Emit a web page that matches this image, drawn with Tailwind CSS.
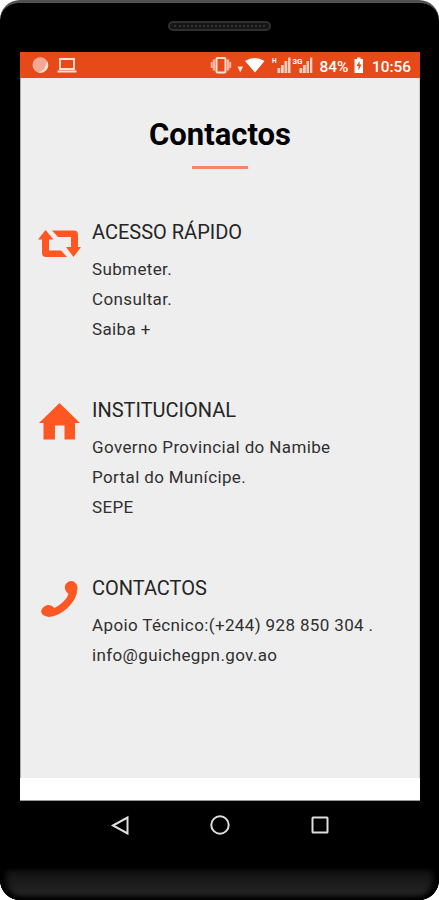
<!DOCTYPE html>
<html lang="pt">
<head>
  <meta charset="UTF-8">
  <meta name="viewport" content="width=device-width, initial-scale=1.0">
  <title>Contactos</title>
  <script src="https://cdn.jsdelivr.net/npm/@tailwindcss/browser@4"></script>
</head>
<body class="bg-white font-['Roboto',sans-serif]">

  <!-- Phone body -->
  <div class="w-[439px] h-[900px] flex flex-col bg-black rounded-[20px] overflow-hidden border-t-3 border-[#505050]">
    <!-- Speaker -->
    <div class="h-[49px] shrink-0 flex justify-center pt-[18px]">
      <div class="w-[103px] h-[10px] rounded-full border-2 border-[#303030] bg-[#151515] flex items-center px-1">
        <div class="w-full border-t-2 border-dotted border-[#333]"></div>
      </div>
    </div>

    <!-- Screen -->
    <div class="mx-5 w-[400px] h-[749px] shrink-0 flex flex-col bg-white border-b border-[#999]">
      <!-- Status bar -->
      <div class="h-[26px] shrink-0 bg-[#e64a19] flex items-center text-white">
        <svg class="w-[400px] h-[26px]" viewBox="0 0 400 26" fill="none">
          <circle cx="20.3" cy="13" r="7.8" fill="#f6a992"/>
          <path d="M27 9a7.800 7.800 0 0 1-9 11.500q8-2 9-11.500z" fill="#fde0d7"/>
          <path d="M40 7h14v10H40zM37.500 19.500h19" stroke="#fde0d7" stroke-width="1.800"/>
          <rect x="196.500" y="6" width="9" height="14.500" rx="1" stroke="#fde0d7" stroke-width="2"/>
          <path d="M194 7.500v11M208 7.500v11" stroke="#f7b5a0" stroke-width="2.500"/>
          <path d="M191.700 10v6M210.200 10v6" stroke="#f7b5a0" stroke-width="2"/>
          <path d="M217.500 14.500h5.500l-2.700 6z" fill="#fde0d7"/>
          <path d="M225 9q9.700-6 19.500 0L235 20.500z" fill="#fff"/>
          <g fill="#fbd0c3">
            <path d="M257.500 16h2.800v5h-2.800zM261 13h2.800v8H261zM264.500 9h2.800v12h-2.800zM268 5.500h2.500V21H268z"/>
            <path d="M279.500 16h2.800v5h-2.800zM283 13h2.800v8H283zM286.500 9h2.500v12h-2.500zM290 5.500h2.300V21H290z"/>
          </g>
          <g fill="#fff" font-family="Roboto" font-weight="700">
            <text x="252" y="11" font-size="6.500">H</text>
            <text x="272.500" y="12" font-size="8">3G</text>
            <text x="299.500" y="19.500" font-size="15.500" font-weight="500" textLength="29" lengthAdjust="spacingAndGlyphs">84%</text>
            <text x="352" y="19.500" font-size="15.500" font-weight="500" textLength="39" lengthAdjust="spacingAndGlyphs">10:56</text>
          </g>
          <path d="M334.500 7h2.500V5.500h3.500V7h2.500v14h-8.500z" fill="#fff"/>
          <path d="M339.500 9l-3 5h2v4.500l3-6h-2z" fill="#e64a19"/>
        </svg>
      </div>

      <!-- Page -->
      <main class="h-[700px] shrink-0 bg-[#eeeeee] border-x border-l-[#aaa] border-r-[#ccc] text-[#303030]">
        <h1 class="pt-[39px] text-center text-[31px] leading-[36px] font-bold text-black">Contactos</h1>
        <div class="mx-auto mt-[13px] w-[56px] h-[3px] bg-[#fa8268]"></div>

        <section class="mt-[44px] h-[178px] flex">
          <div class="w-[71px] shrink-0 pl-[17px] pt-[17px]">
            <svg class="w-[43px] h-[28px]" viewBox="0 0 43 28" fill="#ff5722">
              <path d="M7.500 0L0 9.500h4V23q0 4 4 4h21l-6-6.500H11v-11h4.500zM14 .5h22q4 0 4 4V17h3l-7.500 10L28 17h5V7H20z"/>
            </svg>
          </div>
          <div>
            <h2 class="text-[20px] leading-[38px] text-[#252525]">ACESSO RÁPIDO</h2>
            <ul class="text-[17px] leading-[30px] tracking-[0.37px] pt-[3px]">
              <li>Submeter.</li>
              <li>Consultar.</li>
              <li>Saiba +</li>
            </ul>
          </div>
        </section>

        <section class="h-[178px] flex">
          <div class="w-[71px] shrink-0 pl-[18px] pt-[12px]">
            <svg class="w-[41px] h-[37px]" viewBox="0 0 41 37" fill="#ff5722">
              <path d="M20.500 0L41 20h-5v16.500H25.500V22.500h-9.500v14H4.500V20H0z"/>
            </svg>
          </div>
          <div>
            <h2 class="text-[20px] leading-[38px] text-[#252525]">INSTITUCIONAL</h2>
            <ul class="text-[17px] leading-[30px] tracking-[0.37px] pt-[3px]">
              <li>Governo Provincial do Namibe</li>
              <li>Portal do Munícipe.</li>
              <li>SEPE</li>
            </ul>
          </div>
        </section>

        <section class="flex">
          <div class="w-[71px] shrink-0 pl-[20px] pt-[12px]">
            <svg class="w-[37px] h-[36px]" viewBox="0 0 37 36" fill="#ff5722">
              <path d="M24 4.500Q26 0 30.500 0q5 .5 6 6.500 0 10.500-9 19.500T8 36Q1 35 0 30.500q1-5 6.500-6.500 4-.5 7 3 5-2.500 9-6.500t5-7.500Q23 9.500 24 4.500z"/>
            </svg>
          </div>
          <div>
            <h2 class="text-[20px] leading-[38px] text-[#252525]">CONTACTOS</h2>
            <ul class="text-[17px] leading-[30px] tracking-[0.37px] pt-[3px] whitespace-nowrap">
              <li>Apoio Técnico:(+244) 928 850 304 .</li>
              <li>info@guichegpn.gov.ao</li>
            </ul>
          </div>
        </section>
      </main>
    </div>

    <!-- Navigation keys -->
    <div class="h-[67px] shrink-0 flex justify-center gap-20 pt-[14px]">
      <svg class="w-5 h-5" viewBox="0 0 20 20" fill="none" stroke="#ddd" stroke-width="2"><path d="M3 10.500L17.500 2.500v16z"/></svg>
      <svg class="w-5 h-5" viewBox="0 0 20 20" fill="none" stroke="#ddd" stroke-width="2"><circle cx="10" cy="10" r="8.700"/></svg>
      <svg class="w-5 h-5" viewBox="0 0 20 20" fill="none" stroke="#ddd" stroke-width="2"><rect x="2.500" y="2.500" width="15" height="15" rx=".5"/></svg>
    </div>

    <!-- Chin -->
    <div class="grow rounded-b-[20px] bg-linear-to-b from-[#111] to-[#292929] shadow-[inset_0_-3px_5px_#000,inset_6px_0_6px_#000,inset_-6px_0_6px_#000]"></div>
  </div>

</body>
</html>
